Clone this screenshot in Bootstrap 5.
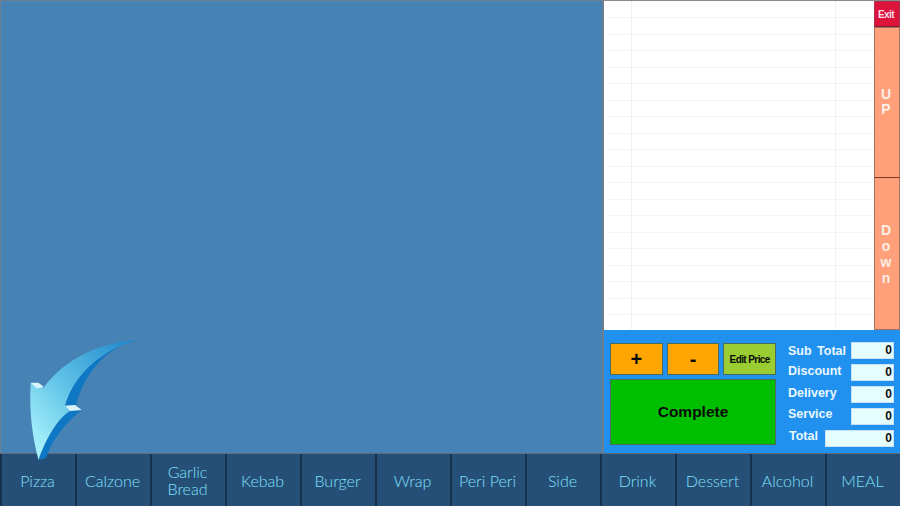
<!DOCTYPE html>
<html lang="en"><head><meta charset="utf-8"><title>POS</title>
<link href="https://cdn.jsdelivr.net/npm/bootstrap@5.3.0/dist/css/bootstrap.min.css" rel="stylesheet">
<style>
html,body{width:900px;height:506px;overflow:hidden;margin:0;background:#4682b4}
.pos-root{width:900px;height:506px;position:relative}
.pos-top{height:453px}
.pos-main{width:603px;background:#4682b4;border:1px solid #6c7f92;border-bottom:0}
.pos-right{width:297px}
.pos-upper{height:330px;border-top:1px solid #8a8a8a}
.pos-grid{width:271px;background:#fff;border-left:1px solid #6d7f90;overflow:hidden}
.pos-grid table{width:267px;border-collapse:collapse;table-layout:fixed;margin-left:3px}
.pos-grid td{height:16.5px;border-bottom:1px solid #f4f4f4;border-right:1px solid #f2f2f2;padding:0}
.pos-grid td:last-child{border-right:0}
.pos-side{width:26px;font-family:"Liberation Sans",sans-serif;font-weight:700;color:#fff}
.btn-exit{height:26px;background:#dc143c;border:1px solid #a8324c;border-bottom-color:#7d1c30;font-size:10px;letter-spacing:-.6px;line-height:1;padding:2px 2px 0 0;color:#f6dfe4}
.btn-nav{background:#ffa07a;border:1px solid #a5745e;font-size:14px;line-height:16px;text-align:center;padding-right:2px;color:#fbefe6}
.btn-up{height:151px;padding-top:59px;line-height:15px;border-bottom-color:#7a3a2a}
.btn-down{height:152px;padding-top:44px;border-top:0}
.pos-panel{height:123px;background:#2191f0;padding:13px 6px 0 6px;gap:12px;border-left:1px solid #6d7f90;font-family:"Liberation Sans",sans-serif}
.pos-keys{width:166px;gap:4px}
.pos-keyrow{gap:4px;height:32px}
.pos-key{border:1px solid #4a6a60;color:#0b0b0b;font-weight:700;display:flex;align-items:center;justify-content:center}
.key-o{width:53px;background:#ffa500;font-size:20px}
.key-e{width:53px;background:#9acd32;font-size:10px;letter-spacing:-.6px;white-space:nowrap}
.key-c{height:66px;background:#00bf00;font-size:15.5px}
.pos-tot{width:106px;margin-top:-1px}
.tot-row{height:22px;color:#e9f7ff;font-weight:700;font-size:12.5px}
.tot-row span{line-height:1}
.tot-row:nth-child(1) span{margin-top:3px;word-spacing:2px}
.tot-row:nth-child(2) span{margin-top:1px}
.tot-row:nth-child(3) span{margin-top:1px}
.tot-row:nth-child(5) span{padding-left:1px}
.tot-box{width:43px;height:17px;background:#e4fdff;border:1px solid #c9dff2;color:#111;font-size:12px;text-align:right;padding-right:1px;line-height:14px}
.tot-wide{width:69px}
.pos-cats{height:53px;background:#264f78;border-top:1px solid #5f6b78;font-family:"Lato",sans-serif}
.pos-cat{flex:1 1 0;color:#7fe0f8;font-size:16px;font-weight:300;line-height:17px;text-align:center;border-left:2px solid #17304d;padding-right:2px;display:flex;align-items:center;justify-content:center}
.pos-arrow{position:absolute;left:0;top:0;pointer-events:none}
</style></head>
<body>
<div class="pos-root d-flex flex-column">
<div class="pos-top d-flex">
 <div class="pos-main"></div>
 <div class="pos-right d-flex flex-column">
  <div class="pos-upper d-flex">
   <div class="pos-grid"><table><colgroup><col style="width:24px"><col style="width:204px"><col></colgroup><tbody id="rows"></tbody></table></div>
   <div class="pos-side d-flex flex-column">
    <div class="btn-exit d-flex align-items-center justify-content-center">Exit</div>
    <div class="btn-nav btn-up">U<br>P</div>
    <div class="btn-nav btn-down">D<br>o<br>w<br>n</div>
   </div>
  </div>
  <div class="pos-panel d-flex">
   <div class="pos-keys d-flex flex-column">
    <div class="pos-keyrow d-flex"><div class="pos-key key-o">+</div><div class="pos-key key-o">-</div><div class="pos-key key-e">Edit Price</div></div>
    <div class="pos-key key-c">Complete</div>
   </div>
   <div class="pos-tot d-flex flex-column">
    <div class="tot-row d-flex justify-content-between align-items-start"><span>Sub Total</span><div class="tot-box">0</div></div>
    <div class="tot-row d-flex justify-content-between align-items-start"><span>Discount</span><div class="tot-box">0</div></div>
    <div class="tot-row d-flex justify-content-between align-items-start"><span>Delivery</span><div class="tot-box">0</div></div>
    <div class="tot-row d-flex justify-content-between align-items-start"><span>Service</span><div class="tot-box">0</div></div>
    <div class="tot-row d-flex justify-content-between align-items-start"><span>Total</span><div class="tot-box tot-wide">0</div></div>
   </div>
  </div>
 </div>
</div>
<div class="pos-cats d-flex">
 <div class="pos-cat">Pizza</div><div class="pos-cat">Calzone</div><div class="pos-cat">Garlic<br>Bread</div><div class="pos-cat">Kebab</div><div class="pos-cat">Burger</div><div class="pos-cat">Wrap</div><div class="pos-cat">Peri Peri</div><div class="pos-cat">Side</div><div class="pos-cat">Drink</div><div class="pos-cat">Dessert</div><div class="pos-cat">Alcohol</div><div class="pos-cat">MEAL</div>
</div>
<svg class="pos-arrow" width="900" height="506" viewBox="0 0 900 506" aria-hidden="true">
 <defs><linearGradient id="af" x1="0.05" y1="0.85" x2="0.95" y2="0"><stop offset="0" stop-color="#a4f0fa"/><stop offset=".45" stop-color="#5cc0e6"/><stop offset="1" stop-color="#1f88cc"/></linearGradient></defs>
 <path d="M136.7 340C110 346 85 370 76 405L65 405.7C72 380 95 352 136.7 340Z" fill="#0f78c4"/>
 <path d="M38.5 460L46 458C52 440 66 422 81.7 410L70 411C58 418 46 438 38.5 460Z" fill="#0f78c4"/>
 <path d="M136.7 340C100 343 65 358 43.5 388L30.7 382.7C29 410 32 435 38.5 460C46 438 58 418 70 411L65 405.7C72 380 95 352 136.7 340Z" fill="url(#af)"/>
 <path d="M30.7 382.7L38.5 382.7L44 387L37 388.5Z" fill="#d8f4fb"/>
 <path d="M65 405.7L75 405L81.7 410L70 411Z" fill="#d8f4fb"/>
</svg>
</div>
<script>
var b=document.getElementById('rows'),h='';for(var i=0;i<20;i++){h+='<tr><td></td><td></td><td></td></tr>'}b.innerHTML=h;
</script>
<script src="https://cdn.jsdelivr.net/npm/bootstrap@5.3.0/dist/js/bootstrap.bundle.min.js"></script>
</body></html>
